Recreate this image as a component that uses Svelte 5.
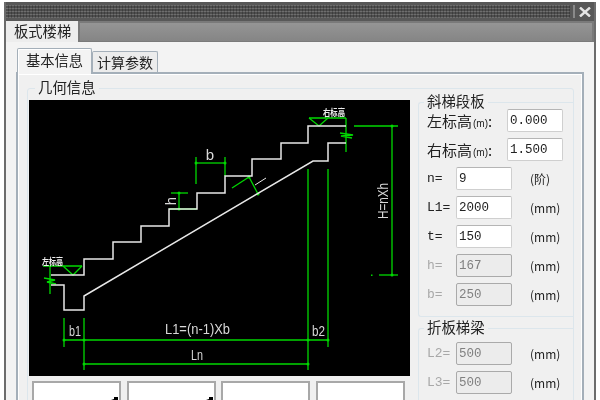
<script lang="ts">
  const tabs = ['基本信息', '计算参数'];

  const slabRows = [
    { label: 'n=', value: '9', unit: '(阶)', off: false, gap: true },
    { label: 'L1=', value: '2000', unit: '(mm)', off: false, gap: false },
    { label: 't=', value: '150', unit: '(mm)', off: false, gap: false },
    { label: 'h=', value: '167', unit: '(mm)', off: true, gap: false },
    { label: 'b=', value: '250', unit: '(mm)', off: true, gap: false }
  ];

  // the third row only shows the top edge of its field in this crop
  const beamRows = [
    { label: 'L2=', value: '500', unit: '(mm)' },
    { label: 'L3=', value: '500', unit: '(mm)' },
    { label: '', value: '', unit: '' }
  ];

  // stair outline in page coordinates, the svg viewBox starts at the panel corner
  const treads = '51,274 84,274 84,258 113,258 113,241 141,241 141,225 169,225 169,208 197,208 197,192 225,192 225,175 252,175 252,158 281,158 281,142 308,142 308,125 346,125';
  const soffit = '346,142 328,142 328,160 313,160 84,295 84,309 64,309 64,284 51,284';

  const greenLines = [
    [50, 265, 50, 293], [43, 265, 82, 265],
    [64, 317, 64, 346], [84, 317, 84, 369], [64, 339, 328, 339], [84, 363, 308, 363],
    [308, 168, 308, 369], [328, 168, 328, 346],
    [392, 125, 392, 274], [354, 125, 398, 125], [379, 274, 398, 274],
    [309, 117, 346, 117], [346, 117, 346, 151],
    [196, 156, 196, 183], [196, 162, 225, 162], [225, 156, 225, 175],
    [171, 192, 188, 192], [179, 192, 179, 208], [169, 208, 197, 208],
    [249, 176, 258, 193], [232, 187, 249, 176]
  ];

  const ticks = [
    [64, 339], [84, 339], [308, 339], [328, 339], [84, 363], [308, 363],
    [392, 125], [392, 274], [196, 162], [225, 162], [179, 192], [179, 208], [249, 176], [258, 193]
  ];
</script>

<div class="window">
  <div class="titlebar">
    <div class="hatch"></div>
    <div class="divider"></div>
    <svg class="close" viewBox="0 0 12 10" width="12" height="10">
      <path d="M1 0.5 L11 9.5 M11 0.5 L1 9.5" stroke="#e4e4e4" stroke-width="2.4" fill="none" />
    </svg>
  </div>

  <div class="docbar">
    <div class="doctab">板式楼梯</div>
    <div class="docrest"></div>
  </div>

  <div class="content">
    <div class="tabs">
      {#each tabs as tab, i}
        <div class="tab" class:active={i === 0}>{tab}</div>
      {/each}
    </div>

    <div class="tabpanel">
      <fieldset class="geo">
        <legend>几何信息</legend>
        <div class="geo-grid">
          <div class="left">
            <svg class="drawing" viewBox="29 99 381 276" width="381" height="276">
              <rect x="29" y="99" width="381" height="276" fill="#000" />
              <g stroke="#00d800" stroke-width="1.3" fill="none">
                {#each greenLines as l}
                  <line x1={l[0]} y1={l[1]} x2={l[2]} y2={l[3]} />
                {/each}
                <polyline points="63,265 73,274 82,265" />
                <polyline points="309,117 319,125 328,117" />
                <polyline points="44,277 55,279 47,281 56,283" />
                <polyline points="340,132 353,134 341,135 352,137" />
              </g>
              <g fill="#00d800">
                {#each ticks as t}
                  <circle cx={t[0]} cy={t[1]} r="1.5" />
                {/each}
                <rect x="371" y="273.5" width="1.5" height="1.5" />
              </g>
              <g stroke="#e8e8e8" stroke-width="1.5" fill="none">
                <polyline points={treads} />
                <polyline points={soffit} />
                <line x1="255" y1="184" x2="266" y2="177" stroke-width="1" />
              </g>
              <g class="cad">
                <text x="52.5" y="264" class="tiny" text-anchor="middle" textLength="21" lengthAdjust="spacingAndGlyphs">左标高</text>
                <text x="334" y="115" class="tiny" text-anchor="middle" textLength="22" lengthAdjust="spacingAndGlyphs">右标高</text>
                <text x="210" y="159" text-anchor="middle">b</text>
                <text x="75" y="335" text-anchor="middle" textLength="12" lengthAdjust="spacingAndGlyphs">b1</text>
                <text x="318.5" y="335" text-anchor="middle" textLength="13" lengthAdjust="spacingAndGlyphs">b2</text>
                <text x="197" y="359" text-anchor="middle" textLength="12" lengthAdjust="spacingAndGlyphs">Ln</text>
                <text x="197.5" y="333" text-anchor="middle" textLength="65" lengthAdjust="spacingAndGlyphs">L1=(n-1)Xb</text>
                <text transform="rotate(-90 176 200)" x="176" y="200" text-anchor="middle">h</text>
                <text transform="rotate(-90 388 200)" x="388" y="200" text-anchor="middle" textLength="36" lengthAdjust="spacingAndGlyphs">H=nXh</text>
              </g>
            </svg>
            <div class="thumbs">
              {#each [true, true, false, false] as marked}
                <div class="thumb">
                  {#if marked}
                    <svg viewBox="0 0 10 4" width="10" height="4">
                      <path d="M0 4 L6 2 L6 0 L10 0 L10 4 Z" fill="#000" />
                    </svg>
                  {/if}
                </div>
              {/each}
            </div>
          </div>

          <div class="right">
            <fieldset class="sub">
              <legend>斜梯段板</legend>
              <div class="row top">
                <span class="label wide">左标高<small>(m)</small>:</span>
                <input value="0.000" />
              </div>
              <div class="row top">
                <span class="label wide">右标高<small>(m)</small>:</span>
                <input value="1.500" />
              </div>
              {#each slabRows as r}
                <div class="row" class:first={r.gap}>
                  <span class="label" class:dim={r.off}>{r.label}</span>
                  <input value={r.value} disabled={r.off} />
                  <span class="unit">{r.unit}</span>
                </div>
              {/each}
            </fieldset>

            <fieldset class="sub second">
              <legend>折板梯梁</legend>
              {#each beamRows as r}
                <div class="row">
                  <span class="label dim">{r.label}</span>
                  <input value={r.value} disabled />
                  <span class="unit">{r.unit}</span>
                </div>
              {/each}
            </fieldset>
          </div>
        </div>
      </fieldset>
    </div>
  </div>
</div>

<style>
  :global(body) {
    margin: 0;
    background: #fff;
  }

  .window {
    box-sizing: border-box;
    width: 592px;
    height: 398px;
    margin: 2px 4px 0;
    overflow: hidden;
    border-left: 2px solid #6c6c6c;
    border-right: 2px solid #6c6c6c;
    background: #f1f1f1;
    font-family: "Noto Sans CJK SC", "Liberation Sans", sans-serif;
    color: #222;
    filter: blur(0.35px);
  }

  .titlebar {
    display: flex;
    align-items: center;
    height: 19px;
    margin: 0 -2px;
    padding: 0 3px 0 2px;
    background: #585858;
  }

  .hatch {
    flex: 1;
    height: 13px;
    background:
      repeating-linear-gradient(90deg, transparent 0 2px, rgba(0, 0, 0, 0.22) 2px 3px),
      repeating-linear-gradient(0deg, #6e6e6e 0 1px, #4e4e4e 1px 3px);
  }

  .divider {
    width: 2px;
    height: 13px;
    margin: 0 4px 0 3px;
    background: #8a8a8a;
  }

  .close {
    display: block;
    margin-right: 2px;
  }

  .docbar {
    display: flex;
    height: 21px;
    background: #7a7a7a;
  }

  .doctab {
    width: 72px;
    font-size: 14.3px;
    line-height: 20px;
    padding-left: 8px;
    box-sizing: border-box;
    background: #ededed;
    white-space: nowrap;
    overflow: hidden;
  }

  .docrest {
    flex: 1;
    margin: 2px 2px 1px 2px;
    background: linear-gradient(#959595, #858585);
  }

  .content {
    padding: 6px 10px 0;
    background: #f3f3f3;
  }

  .tabs {
    display: flex;
    align-items: flex-end;
    height: 24px;
    padding-left: 1px;
  }

  .tab {
    position: relative;
    box-sizing: border-box;
    width: 66px;
    height: 21px;
    border: 1px solid #a4afb9;
    border-bottom: none;
    border-radius: 2px 2px 0 0;
    font-size: 14px;
    line-height: 20px;
    text-align: center;
    background: #ececec;
    white-space: nowrap;
  }

  .tab.active {
    z-index: 1;
    width: 75px;
    height: 26px;
    margin-bottom: -2px;
    font-size: 14.3px;
    line-height: 22px;
    background: #f3f3f3;
    box-shadow: inset 1px 1px 0 #fff;
  }

  .tabpanel {
    box-sizing: border-box;
    height: 400px;
    padding: 9px 8px 0 9px;
    border: 2px solid #a4afb9;
    box-shadow: inset 0 0 0 1px #fff;
    background: #f0f0f0;
  }

  fieldset {
    box-sizing: border-box;
    min-width: 0;
    margin: 0;
    padding: 0;
    border: 1px solid #dce6ec;
    border-radius: 3px;
  }

  legend {
    padding: 0 3px;
    font-size: 14.4px;
    white-space: nowrap;
  }

  .geo {
    height: 390px;
    padding: 0 0 0 1px;
  }

  .geo > legend {
    margin-left: 6px;
    padding-bottom: 2px;
    line-height: 8px;
  }

  .geo-grid {
    display: flex;
    gap: 8px;
  }

  .left {
    width: 381px;
    padding-top: 7px;
  }

  .drawing {
    display: block;
  }

  .cad {
    fill: #d8d8d8;
    font-family: "Liberation Sans", sans-serif;
    font-size: 15px;
  }

  .cad .tiny {
    font-family: "Noto Sans CJK SC", sans-serif;
    font-size: 9px;
    font-weight: 700;
    fill: #eee;
  }

  .thumbs {
    display: flex;
    gap: 5.5px;
    margin-top: 5px;
    padding-left: 3px;
  }

  .thumb {
    box-sizing: border-box;
    display: flex;
    justify-content: flex-end;
    width: 89px;
    height: 60px;
    padding: 14px 1px 0 0;
    border: 2px solid #a8a8a8;
    background: #fff;
  }

  .right {
    width: 155px;
    padding-top: 3px;
  }

  .sub {
    height: 221px;
    padding: 0 0 0 8px;
    border-right: none;
    border-radius: 3px 0 0 3px;
  }

  .sub > legend {
    margin-left: -3px;
    padding-bottom: 3px;
    line-height: 10px;
  }

  .sub.second {
    height: 120px;
    margin-top: 5px;
  }

  .row {
    display: flex;
    align-items: center;
    height: 23px;
    margin-bottom: 6px;
  }

  .row.first {
    margin-top: 2px;
  }

  .sub.second .row:first-of-type {
    margin-top: 7px;
  }

  .label {
    width: 29px;
    font-family: "Liberation Mono", monospace;
    font-size: 13px;
    white-space: nowrap;
  }

  .label.wide {
    width: 80px;
    font-family: "Noto Sans CJK SC", sans-serif;
    font-size: 15px;
  }

  .label small {
    font-family: "Liberation Sans", sans-serif;
    font-size: 10px;
    margin-left: 1px;
  }

  .label.dim {
    color: #a8a8a8;
  }

  input {
    box-sizing: border-box;
    width: 56px;
    height: 23px;
    padding: 0 2px;
    border: 1px solid #cfcfcf;
    border-top-color: #b5b5b5;
    border-radius: 2px;
    outline: none;
    background: #fff;
    color: #222;
    font-family: "Liberation Mono", monospace;
    font-size: 12.5px;
  }

  input:disabled {
    border: 1px solid #aaa;
    background: #ececec;
    color: #808080;
  }

  .unit {
    margin-left: 18px;
    font-family: "Noto Sans CJK SC", "Liberation Sans", sans-serif;
    font-size: 12px;
    white-space: nowrap;
  }
</style>
